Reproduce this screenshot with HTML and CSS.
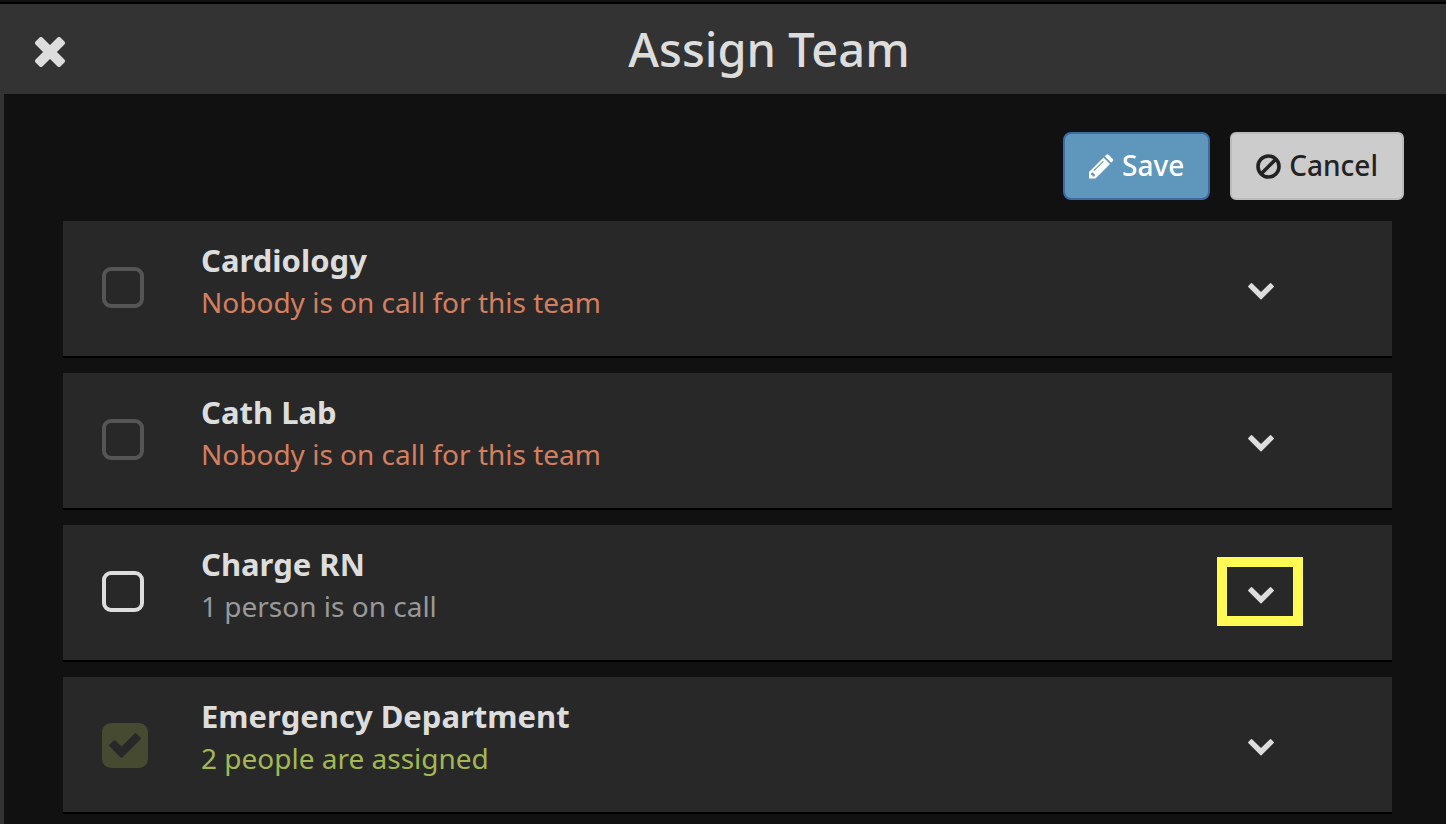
FILE: index.html
```html
<!DOCTYPE html>
<html lang="en">
    <head>
        <meta charset="utf-8">
        <meta name="viewport" content="width=device-width, initial-scale=1">
        <title>Assign Team</title>
        <link rel="stylesheet" href="styles.css">
    </head>
    <body>
        <header class="header">
            <button class="close" type="button" aria-label="Close">
                <svg width="30" height="30" viewBox="0 0 30 30"><path d="M6 2L15 11L24 2L28 6L19 15L28 24L24 28L15 19L6 28L2 24L11 15L2 6Z" fill="currentColor" stroke="currentColor" stroke-width="4" stroke-linejoin="round"/></svg>
            </button>
            <h1 class="title">Assign Team</h1>
        </header>
        <main class="content">
            <div class="toolbar">
                <button class="btn btn-save" type="button">
                    <svg width="25" height="25" viewBox="0 0 25 25"><path fill="currentColor" fill-rule="evenodd" d="M0 24.500V18L14.500 3.500L21 10L6.500 24.500ZM2 19.500V21H3.500V22.500H5L6.300 21.200L3.300 18.200ZM4.600 16.300L5.300 17L14.800 7.500L14.100 6.800Z"/><path fill="currentColor" d="M15.700 2.300L17.200 .9Q18.500 -.3 19.800 .9L23.600 4.700Q24.900 6 23.600 7.300L22.200 8.800Z"/></svg>
                    <span>Save</span>
                </button>
                <button class="btn btn-cancel" type="button">
                    <svg width="25" height="25" viewBox="0 0 25 25" fill="none" stroke="currentColor" stroke-width="3.600"><circle cx="12.500" cy="12.500" r="10.500"/><path d="M5 20L20 5"/></svg>
                    <span>Cancel</span>
                </button>
            </div>
            <ul class="teams">
                <li class="team">
                    <div class="check">
                        <input type="checkbox" id="cardiology" disabled>
                    </div>
                    <div class="info">
                        <label class="name" for="cardiology">Cardiology</label>
                        <p class="status status-none">Nobody is on call for this team</p>
                    </div>
                    <button class="toggle" type="button" aria-label="Show Cardiology">
                        <svg width="26" height="17" viewBox="0 0 26 17"><path d="M3.500 .8L.8 3.500L13 15.800L25.200 3.500L22.500 .8L13 10Z" fill="currentColor" stroke="currentColor" stroke-width="1.500" stroke-linejoin="round"/></svg>
                    </button>
                </li>
                <li class="team">
                    <div class="check">
                        <input type="checkbox" id="cath-lab" disabled>
                    </div>
                    <div class="info">
                        <label class="name" for="cath-lab">Cath Lab</label>
                        <p class="status status-none">Nobody is on call for this team</p>
                    </div>
                    <button class="toggle" type="button" aria-label="Show Cath Lab">
                        <svg width="26" height="17" viewBox="0 0 26 17"><path d="M3.500 .8L.8 3.500L13 15.800L25.200 3.500L22.500 .8L13 10Z" fill="currentColor" stroke="currentColor" stroke-width="1.500" stroke-linejoin="round"/></svg>
                    </button>
                </li>
                <li class="team">
                    <div class="check">
                        <input type="checkbox" id="charge-rn">
                    </div>
                    <div class="info">
                        <label class="name" for="charge-rn">Charge RN</label>
                        <p class="status">1 person is on call</p>
                    </div>
                    <button class="toggle highlight" type="button" aria-label="Show Charge RN">
                        <svg width="26" height="17" viewBox="0 0 26 17"><path d="M3.500 .8L.8 3.500L13 15.800L25.200 3.500L22.500 .8L13 10Z" fill="currentColor" stroke="currentColor" stroke-width="1.500" stroke-linejoin="round"/></svg>
                    </button>
                </li>
                <li class="team">
                    <div class="check">
                        <input type="checkbox" id="emergency" checked disabled>
                        <svg width="32" height="25" viewBox="0 0 32 25"><path d="M5.500 8.500L1.500 12.500L12.500 23.500L30.500 5.500L26.500 1.500L12.500 15.500Z" fill="currentColor" stroke="currentColor" stroke-width="2.500" stroke-linejoin="round"/></svg>
                    </div>
                    <div class="info">
                        <label class="name" for="emergency">Emergency Department</label>
                        <p class="status status-assigned">2 people are assigned</p>
                    </div>
                    <button class="toggle" type="button" aria-label="Show Emergency Department">
                        <svg width="26" height="17" viewBox="0 0 26 17"><path d="M3.500 .8L.8 3.500L13 15.800L25.200 3.500L22.500 .8L13 10Z" fill="currentColor" stroke="currentColor" stroke-width="1.500" stroke-linejoin="round"/></svg>
                    </button>
                </li>
            </ul>
        </main>
    </body>
</html>
```
FILE: styles.css
```css
*{
    box-sizing: border-box;
}
body{
    margin: 0;
    padding-top: 2px;
    background-color: #111;
    color: #ddd;
    font-family: "Lucida Grande", "Noto Sans", sans-serif;
}
button{
    font-family: inherit;
    cursor: pointer;
}
svg{
    display: block;
    flex: none;
}
.header{
    display: flex;
    align-items: center;
    height: 92px;
    border-top: 2px solid #000;
    background-color: #333;
}
.close{
    display: flex;
    width: 92px;
    padding: 5px 0 0 35px;
    border: 0;
    background: none;
    color: #ddd;
}
.title{
    flex: 1;
    margin: 0;
    font-size: 47px;
    font-weight: 500;
    line-height: 90px;
    text-align: center;
}
.content{
    min-height: calc(100vh - 94px);
    padding: 38px 54px 10px 59px;
    border-left: 4px solid #333;
}
.toolbar{
    display: flex;
    justify-content: flex-end;
    gap: 20px;
    margin: 0 -12px 21px 0;
}
.btn{
    display: flex;
    align-items: center;
    gap: 8px;
    height: 68px;
    padding: 0 24px;
    border: 2px solid;
    border-radius: 8px;
    font-size: 28px;
    font-weight: 500;
    line-height: 40px;
}
.btn span{
    padding-bottom: 2px;
}
.btn-save{
    border-color: #3d6ba5;
    background-color: #5f96bb;
    color: #fff;
}
.btn-cancel{
    border-color: #bbb;
    border-radius: 6px;
    background-color: #ccc;
    color: #222;
}
.teams{
    display: flex;
    flex-direction: column;
    gap: 15px;
    margin: 0;
    padding: 0;
    list-style: none;
}
.team{
    display: flex;
    align-items: flex-start;
    height: 137px;
    padding: 0 89px 0 39px;
    border-bottom: 2px solid #000;
    background-color: #282828;
}
.check{
    display: grid;
    justify-items: start;
    width: 99px;
    padding-top: 46px;
}
.check input, .check svg{
    grid-area: 1 / 1;
}
.check svg{
    margin: 10px 0 0 7px;
    color: #282828;
    pointer-events: none;
}
input[type=checkbox]{
    appearance: none;
    width: 42px;
    height: 41px;
    margin: 0;
    border: 4px solid #ddd;
    border-radius: 9px;
}
input[type=checkbox]:disabled{
    border-color: #555;
}
input[type=checkbox]:checked{
    width: 46px;
    height: 45px;
    border: 0;
    background-color: #464a30;
}
.info{
    flex: 1;
    padding-top: 19px;
}
.name{
    display: block;
    font-size: 31px;
    font-weight: bold;
    line-height: 40px;
}
.status{
    margin: 0;
    color: #999;
    font-size: 28px;
    line-height: 44px;
}
.status-none{
    color: #d47f5f;
}
.status-assigned{
    color: #a3b854;
}
.toggle{
    display: flex;
    align-items: center;
    justify-content: center;
    width: 86px;
    height: 69px;
    margin-top: 32px;
    padding: 8px 0 0 2px;
    border: 10px solid transparent;
    background: none;
    color: #ddd;
}
.highlight{
    border-color: #fffb54;
}
```
